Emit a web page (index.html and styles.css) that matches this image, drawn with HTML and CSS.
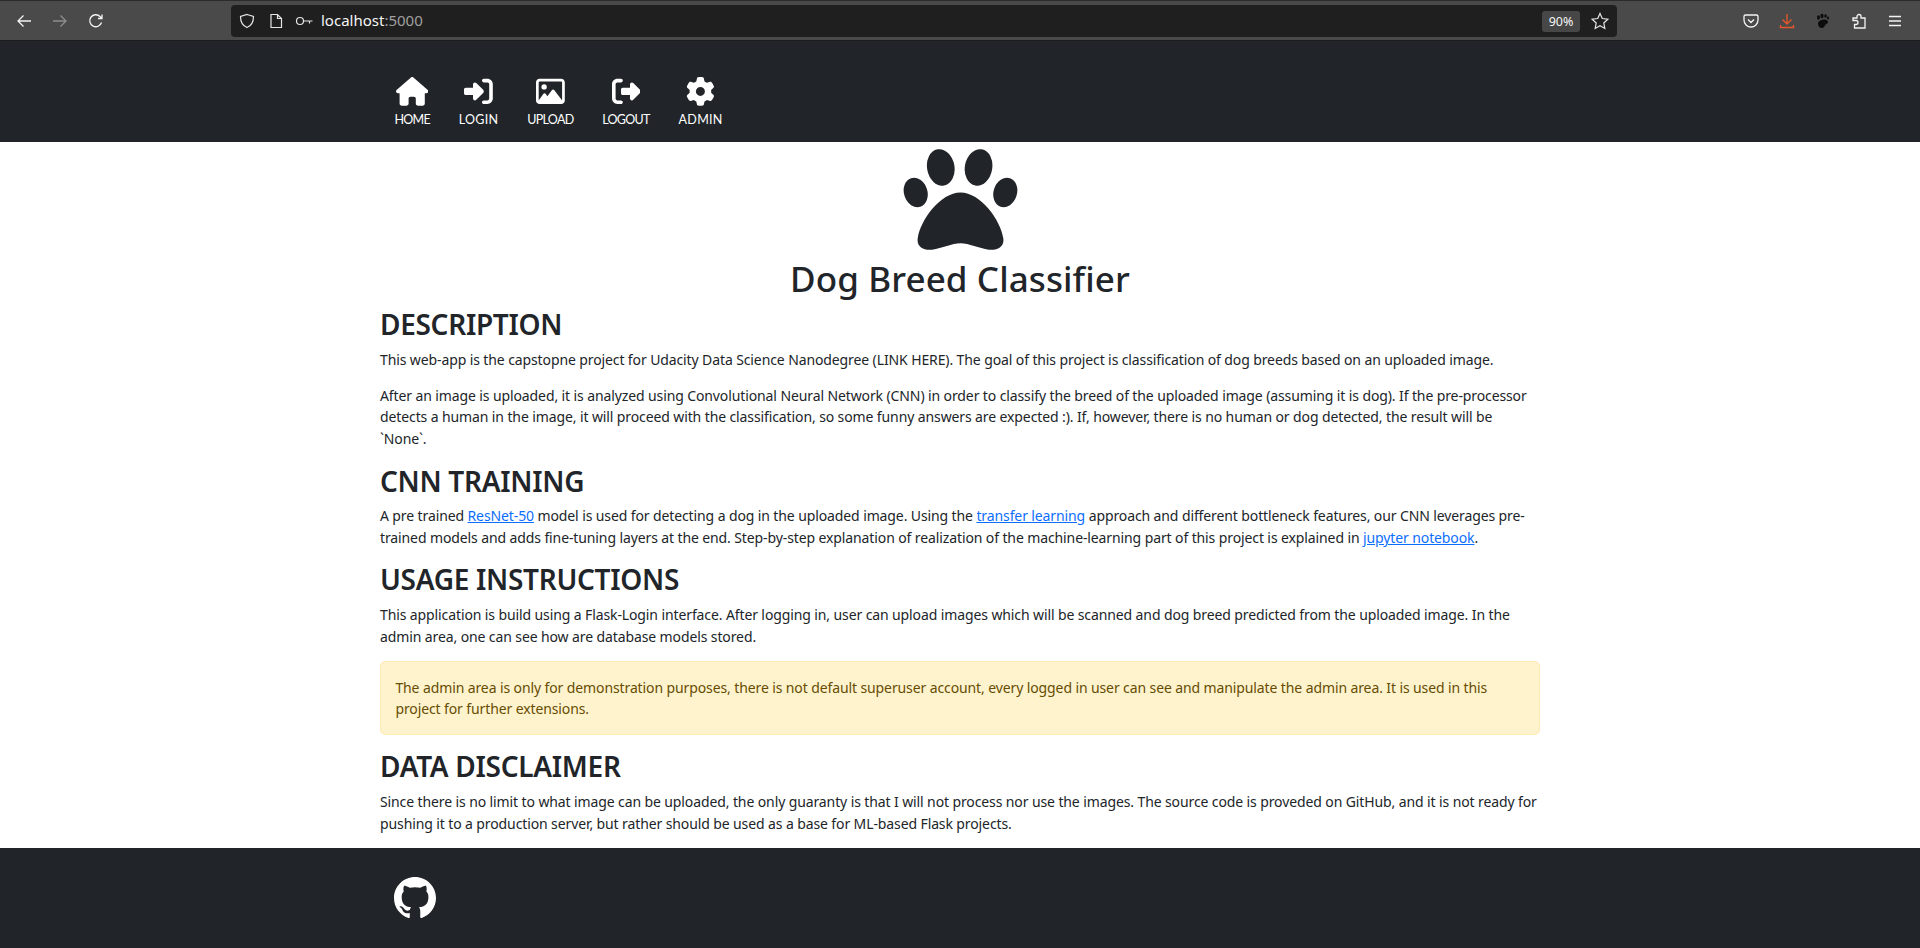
FILE: index.html
```html
<!DOCTYPE html>
<html lang="en">
<head>
  <meta charset="UTF-8">
  <meta name="viewport" content="width=device-width, initial-scale=1">
  <title>Dog Breed Classifier</title>
  <link rel="stylesheet" href="styles.css">
</head>
<body>
  <div class="page">
    <!-- browser toolbar -->
    <div class="toolbar">
      <div class="tool-group">
        <svg class="tool-icon" viewBox="0 0 16 16"><path d="M15 8H2M7.5 2.5 2 8l5.500 5.500" /></svg>
        <svg class="tool-icon dim" viewBox="0 0 16 16"><path d="M1 8h13M8.500 2.500 14 8l-5.500 5.500" /></svg>
        <svg class="tool-icon" viewBox="0 0 16 16"><path d="M13.500 9.500A6 6 0 1 1 12 3.500L14 5.500M14 1.500v4h-4" /></svg>
      </div>
      <div class="urlbar">
        <svg class="url-icon" viewBox="0 0 16 16"><path d="M8 1.500 14.500 3.500c0 5.500-1.500 9-6.500 11-5-2-6.500-5.500-6.500-11z" /></svg>
        <svg class="url-icon" viewBox="0 0 16 16"><path d="M3 1.500h6.500L13.500 5.500v9h-10.500zM9.500 1.500v4h4" /></svg>
        <svg class="url-icon key" viewBox="0 0 18 16"><circle cx="5" cy="8" r="3.500" /><path d="M8.500 8h9M14.500 8v2.500" /></svg>
        <span class="url-text">localhost<span class="url-port">:5000</span></span>
        <span class="zoom-badge">90%</span>
        <svg class="url-icon star" viewBox="0 0 18 18"><path d="M9 1.500 11.300 6.500 16.800 7.200 12.800 11 13.800 16.400 9 13.700 4.200 16.400 5.200 11 1.200 7.200 6.700 6.500z" /></svg>
      </div>
      <div class="tool-group right">
        <svg class="tool-icon" viewBox="0 0 16 16"><path d="M2.500 2h11A1.500 1.500 0 0 1 15 3.500V7A7 7 0 0 1 1 7V3.500A1.500 1.500 0 0 1 2.500 2zM5 6.500 8 9.500l3-3" /></svg>
        <svg class="tool-icon orange" viewBox="0 0 16 16"><path d="M8 1v9.500M3.500 6.500 8 11l4.500-4.500M1.500 12v2.500h13V12" /></svg>
        <svg class="tool-icon foot" viewBox="0 0 16 16"><path d="M7 7c3-1 6 0 6 2 0 1.500-1.500 1.500-2.500 2.500-1 1.500-1.500 3.500-3.500 3.500-2.500 0-4-2-4-4.500C3 8.500 4.500 7.500 7 7z" /><ellipse cx="3.500" cy="4.500" rx="1.400" ry="2.200" /><ellipse cx="7" cy="3" rx="1.600" ry="2.300" /><ellipse cx="10.500" cy="3" rx="1.300" ry="1.800" /><ellipse cx="13" cy="5" rx="1" ry="1.400" /></svg>
        <svg class="tool-icon" viewBox="0 0 16 16"><path d="M6 3.500a2 2 0 1 1 4 0V5h4v10H3.500v-3.500H5a2 2 0 0 0 0-4H2V5h4z" /></svg>
        <svg class="tool-icon" viewBox="0 0 16 16"><path d="M2 3.500h12M2 8h12M2 12.500h12" /></svg>
      </div>
    </div>

    <nav class="navbar">
      <div class="container nav-links">
        <a class="nav-link" href="#">
          <svg class="nav-icon" viewBox="0 0 576 512"><path d="M575.8 255.5c0 18-15 32.100-32 32.100h-32l.7 160.200c0 2.700-.2 5.400-.5 8.100V472c0 22.100-17.900 40-40 40H456c-1.100 0-2.200 0-3.300-.1c-1.400 .1-2.800 .1-4.200 .1H416 392c-22.100 0-40-17.900-40-40V448 384c0-17.700-14.300-32-32-32H256c-17.700 0-32 14.300-32 32v64 24c0 22.100-17.900 40-40 40H160 128.100c-1.500 0-3-.1-4.500-.2c-1.200 .1-2.400 .2-3.600 .2H104c-22.100 0-40-17.900-40-40V360c0-.9 0-1.900 .1-2.800V287.600H32c-18 0-32-14-32-32.100c0-9 3-17 10-24L266.400 8c7-7 15-8 22-8s15 2 21 7L564.800 231.500c8 7 12 15 11 24z"/></svg>
          <span>HOME</span>
        </a>
        <a class="nav-link wide" href="#">
          <svg class="nav-icon" viewBox="0 0 512 512"><path d="M217.900 105.900L340.700 228.700c7.200 7.200 11.300 17.100 11.300 27.300s-4.100 20.100-11.300 27.300L217.900 406.100c-6.400 6.400-15 9.900-24 9.900c-18.700 0-33.900-15.200-33.900-33.900l0-62.100L32 320c-17.700 0-32-14.300-32-32l0-64c0-17.700 14.300-32 32-32l128 0 0-62.100c0-18.700 15.200-33.900 33.900-33.900c9 0 17.600 3.600 24 9.900zM352 416l64 0c17.700 0 32-14.300 32-32l0-256c0-17.700-14.300-32-32-32l-64 0c-17.700 0-32-14.300-32-32s14.300-32 32-32l64 0c53 0 96 43 96 96l0 256c0 53-43 96-96 96l-64 0c-17.700 0-32-14.300-32-32s14.300-32 32-32z"/></svg>
          <span>LOGIN</span>
        </a>
        <a class="nav-link" href="#">
          <svg class="nav-icon" viewBox="0 0 512 512"><path d="M448 80c8.800 0 16 7.200 16 16V415.800l-5-6.500-136-176c-4.500-5.900-11.600-9.300-19-9.300s-14.400 3.400-19 9.300L202 340.700l-30.500-42.700C167 291.700 159.800 288 152 288s-15 3.700-19.500 10.100l-80 112L48 416.300l0-.3V96c0-8.800 7.200-16 16-16H448zM64 32C28.700 32 0 60.700 0 96V416c0 35.300 28.700 64 64 64H448c35.300 0 64-28.700 64-64V96c0-35.300-28.700-64-64-64H64zm80 192a48 48 0 1 0 0-96 48 48 0 1 0 0 96z"/></svg>
          <span>UPLOAD</span>
        </a>
        <a class="nav-link" href="#">
          <svg class="nav-icon" viewBox="0 0 512 512"><path d="M377.900 105.900L500.700 228.700c7.200 7.200 11.300 17.100 11.300 27.300s-4.100 20.100-11.300 27.300L377.900 406.100c-6.400 6.400-15 9.900-24 9.900c-18.700 0-33.900-15.200-33.900-33.900l0-62.100-128 0c-17.700 0-32-14.300-32-32l0-64c0-17.700 14.300-32 32-32l128 0 0-62.100c0-18.700 15.200-33.900 33.900-33.900c9 0 17.600 3.600 24 9.900zM160 96L96 96c-17.700 0-32 14.300-32 32l0 256c0 17.700 14.300 32 32 32l64 0c17.700 0 32 14.300 32 32s-14.300 32-32 32l-64 0c-53 0-96-43-96-96L0 128C0 75 43 32 96 32l64 0c17.700 0 32 14.300 32 32s-14.300 32-32 32z"/></svg>
          <span>LOGOUT</span>
        </a>
        <a class="nav-link wide" href="#">
          <svg class="nav-icon" viewBox="0 0 512 512"><path d="M495.900 166.600c3.200 8.700 .5 18.400-6.400 24.600l-43.300 39.400c1.100 8.300 1.700 16.800 1.700 25.400s-.6 17.100-1.700 25.400l43.300 39.400c6.900 6.200 9.600 15.900 6.400 24.600c-4.400 11.900-9.700 23.300-15.800 34.300l-4.700 8.100c-6.600 11-14 21.400-22.100 31.200c-5.900 7.200-15.700 9.600-24.500 6.800l-55.700-17.700c-13.400 10.300-28.200 18.900-44 25.400l-12.500 57.100c-2 9.100-9 16.300-18.200 17.800c-13.800 2.300-28 3.500-42.500 3.500s-28.700-1.200-42.500-3.500c-9.200-1.500-16.200-8.700-18.200-17.800l-12.500-57.100c-15.800-6.500-30.600-15.100-44-25.400L83.100 425.900c-8.800 2.800-18.600 .3-24.500-6.800c-8.100-9.800-15.500-20.200-22.100-31.200l-4.700-8.100c-6.100-11-11.400-22.400-15.800-34.300c-3.200-8.700-.5-18.400 6.400-24.600l43.300-39.400C64.600 273.100 64 264.600 64 256s.6-17.100 1.700-25.400L22.400 191.200c-6.900-6.200-9.600-15.900-6.400-24.600c4.400-11.900 9.700-23.300 15.800-34.300l4.700-8.100c6.600-11 14-21.400 22.100-31.200c5.900-7.200 15.700-9.600 24.500-6.800l55.700 17.700c13.400-10.300 28.200-18.900 44-25.400l12.500-57.100c2-9.100 9-16.300 18.200-17.800C227.300 1.200 241.500 0 256 0s28.700 1.200 42.500 3.500c9.200 1.500 16.200 8.700 18.200 17.800l12.500 57.100c15.800 6.500 30.600 15.100 44 25.400l55.700-17.700c8.800-2.800 18.600-.3 24.500 6.800c8.100 9.800 15.500 20.200 22.100 31.200l4.700 8.100c6.100 11 11.400 22.400 15.800 34.300zM256 336a80 80 0 1 0 0-160 80 80 0 1 0 0 160z"/></svg>
          <span>ADMIN</span>
        </a>
      </div>
    </nav>

    <main class="container content">
      <div class="logo">
        <svg class="paw" viewBox="368 28 344 302">
          <ellipse cx="481" cy="83" rx="41" ry="55" transform="rotate(-10 481 83)"/>
          <ellipse cx="594" cy="83" rx="41" ry="55" transform="rotate(10 594 83)"/>
          <ellipse cx="406" cy="158" rx="35" ry="45" transform="rotate(-18 406 158)"/>
          <ellipse cx="674" cy="158" rx="35" ry="45" transform="rotate(18 674 158)"/>
          <path d="M540 158C480 158 420 240 412 295C408 320 430 332 455 329C485 325 515 310 540 310C565 310 595 325 625 329C650 332 672 320 668 295C660 240 600 158 540 158Z"/>
        </svg>
        <h1>Dog Breed Classifier</h1>
      </div>

      <h2>DESCRIPTION</h2>
      <p>This web-app is the capstopne project for Udacity Data Science Nanodegree (LINK HERE). The goal of this project is classification of dog breeds based on an uploaded image.</p>
      <p>After an image is uploaded, it is analyzed using Convolutional Neural Network (CNN) in order to classify the breed of the uploaded image (assuming it is dog). If the pre-processor detects a human in the image, it will proceed with the classification, so some funny answers are expected :). If, however, there is no human or dog detected, the result will be `None`.</p>

      <h2>CNN TRAINING</h2>
      <p>A pre trained <a href="#">ResNet-50</a> model is used for detecting a dog in the uploaded image. Using the <a href="#">transfer learning</a> approach and different bottleneck features, our CNN leverages pre-trained models and adds fine-tuning layers at the end. Step-by-step explanation of realization of the machine-learning part of this project is explained in <a href="#">jupyter notebook</a>.</p>

      <h2>USAGE INSTRUCTIONS</h2>
      <p>This application is build using a Flask-Login interface. After logging in, user can upload images which will be scanned and dog breed predicted from the uploaded image. In the admin area, one can see how are database models stored.</p>
      <div class="alert">The admin area is only for demonstration purposes, there is not default superuser account, every logged in user can see and manipulate the admin area. It is used in this project for further extensions.</div>

      <h2>DATA DISCLAIMER</h2>
      <p>Since there is no limit to what image can be uploaded, the only guaranty is that I will not process nor use the images. The source code is proveded on GitHub, and it is not ready for pushing it to a production server, but rather should be used as a base for ML-based Flask projects.</p>
    </main>

    <footer class="footer">
      <div class="container">
        <a class="github" href="#">
          <svg viewBox="0 0 16 16"><path d="M8 0C3.580 0 0 3.580 0 8c0 3.540 2.290 6.530 5.470 7.590.4.07.55-.17.55-.38 0-.19-.01-.82-.01-1.490-2.010.37-2.530-.49-2.690-.94-.09-.23-.48-.94-.82-1.130-.28-.15-.68-.52-.01-.53.63-.01 1.080.58 1.230.82.72 1.210 1.870.87 2.330.66.07-.52.28-.87.51-1.070-1.780-.2-3.640-.89-3.640-3.950 0-.87.31-1.590.82-2.150-.08-.2-.36-1.020.08-2.120 0 0 .67-.21 2.200.82.64-.18 1.320-.27 2-.27.68 0 1.360.09 2 .27 1.530-1.040 2.200-.82 2.200-.82.44 1.100.16 1.920.08 2.120.51.56.82 1.270.82 2.150 0 3.070-1.870 3.750-3.650 3.950.29.25.54.73.54 1.480 0 1.070-.01 1.930-.01 2.200 0 .21.15.46.55.38A8.013 8.013 0 0016 8c0-4.420-3.580-8-8-8z"/></svg>
        </a>
      </div>
    </footer>
  </div>
</body>
</html>
```

FILE: styles.css
```css
* {
  box-sizing: border-box;
}

body {
  margin: 0;
  font-family: "Noto Sans", "Open Sans", sans-serif;
  font-size: 14px;
  line-height: 21.6px;
  color: #212529;
  background-color: #fff;
}

.page {
  display: flex;
  flex-direction: column;
  height: 948px;
  overflow: hidden;
}

.container {
  width: 1160px;
  margin: 0 auto;
}

/* browser toolbar */
.toolbar {
  display: flex;
  align-items: center;
  height: 41px;
  flex-shrink: 0;
  padding: 1px 0 0 0;
  background-color: #4a4a4a;
  border-top: 1px solid #2b2b2b;
  border-bottom: 1px solid #1c1c1c;
}

.tool-group {
  display: flex;
  align-items: center;
  gap: 20px;
  padding-left: 16px;
  width: 231px;
}

.tool-group.right {
  flex: 1;
  gap: 20px;
  justify-content: flex-end;
  padding: 0 17px 0 0;
}

.tool-icon {
  width: 16px;
  height: 16px;
  fill: none;
  stroke: #f4f4f4;
  stroke-width: 1.3;
}

.tool-icon.dim {
  stroke: #8d8d8d;
}

.tool-icon.orange {
  stroke: #e8562a;
}

.tool-icon.foot {
  fill: #0c0c0c;
  stroke: none;
}

.urlbar {
  display: flex;
  align-items: center;
  width: 1386px;
  height: 32px;
  padding: 0 8px;
  background-color: #1f1f1f;
  border-radius: 4px;
  color: #f4f4f4;
  font-size: 15px;
}

.url-icon {
  width: 16px;
  height: 16px;
  margin-right: 13px;
  fill: none;
  stroke: #e6e6e6;
  stroke-width: 1.2;
}

.url-icon.key {
  width: 18px;
  margin-left: -2px;
  margin-right: 8px;
}

.url-icon.star {
  width: 18px;
  height: 18px;
  margin-right: 0;
}

.url-text {
  flex: 1;
}

.url-port {
  color: #a0a0a0;
}

.zoom-badge {
  width: 38px;
  height: 21px;
  margin-right: 11px;
  background-color: #474747;
  border-radius: 3px;
  font-size: 12.5px;
  line-height: 21px;
  text-align: center;
}

/* site navbar */
.navbar {
  height: 101px;
  flex-shrink: 0;
  background-color: #212529;
}

.nav-links {
  display: flex;
  padding-top: 36px;
}

.nav-link {
  display: flex;
  flex-direction: column;
  align-items: center;
  padding: 0 14.4px;
  color: #fff;
  text-decoration: none;
  font-family: "Lato", sans-serif;
  font-size: 12.5px;
  line-height: 14px;
  letter-spacing: -0.7px;
}

.nav-link.wide {
  letter-spacing: 0.3px;
}

.nav-icon {
  height: 28.8px;
  margin-bottom: 7px;
  fill: #fff;
}

/* page body */
.content {
  flex: 1;
}

.logo {
  display: flex;
  flex-direction: column;
  align-items: center;
}

.paw {
  width: 115px;
  height: 101px;
  margin-top: 7px;
  fill: #212529;
}

h1 {
  margin: 7px 0 7.2px;
  font-size: 35px;
  font-weight: 500;
  line-height: 43.2px;
  letter-spacing: 0.1px;
}

h2 {
  margin: 0 0 7.2px;
  font-size: 28px;
  font-weight: 600;
  line-height: 34.56px;
  letter-spacing: -0.3px;
}

p {
  margin: 0 0 14px;
  letter-spacing: -0.11px;
}

a {
  color: #0d6efd;
}

.alert {
  margin-bottom: 14px;
  padding: 14.4px;
  color: #664d03;
  background-color: #fff3cd;
  border: 1px solid #ffecb5;
  border-radius: 5px;
  letter-spacing: -0.11px;
}

.footer {
  height: 100px;
  flex-shrink: 0;
  padding-top: 29px;
  background-color: #212529;
}

.github {
  display: block;
  width: 42px;
  height: 42px;
  margin-left: 14px;
}

.github svg {
  display: block;
  width: 42px;
  height: 42px;
  fill: #fff;
}
```
